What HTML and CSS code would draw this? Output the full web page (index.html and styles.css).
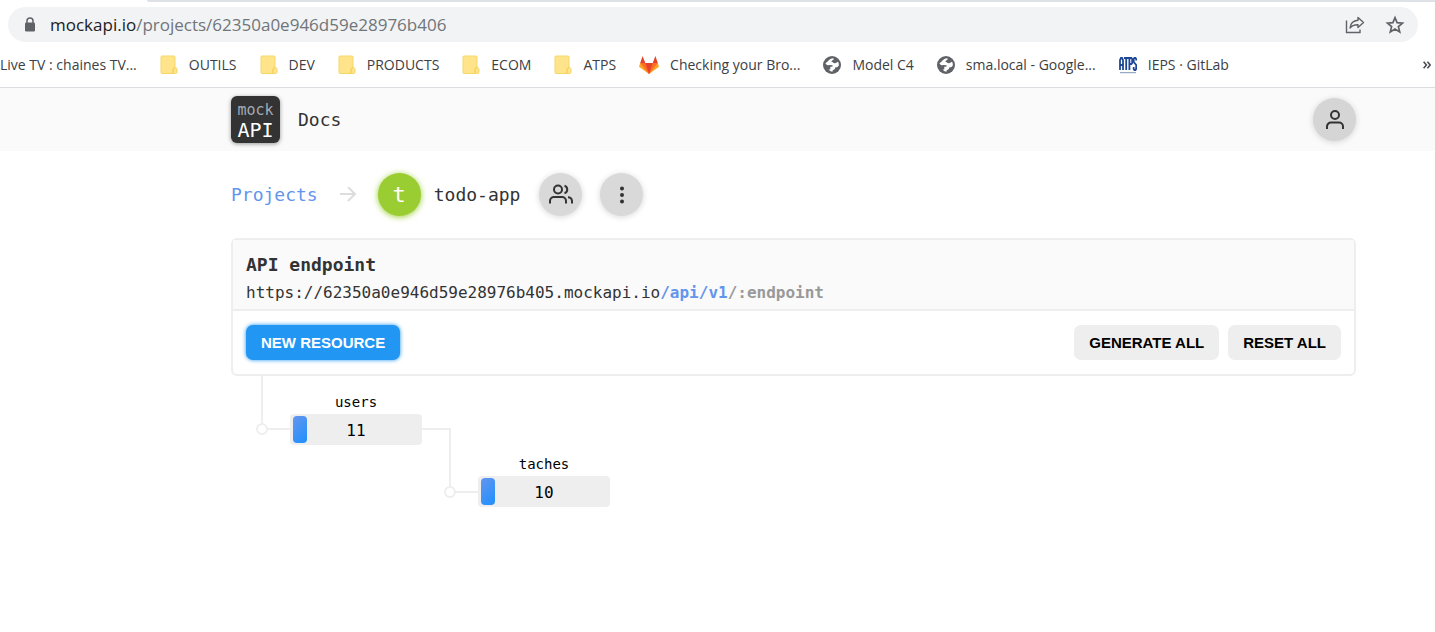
FILE: index.html
```html
<!DOCTYPE html>
<html lang="en">
<head>
<meta charset="utf-8">
<title>mockAPI - todo-app</title>
<link rel="stylesheet" href="styles.css">
</head>
<body>
<svg class="defs" width="0" height="0" aria-hidden="true">
  <symbol id="folder" viewBox="0 0 18 20">
    <path d="M2 1h12a1 1 0 0 1 1 1v11h1.200a1 1 0 0 1 .8 1v3a1.500 1.500 0 0 1-1.500 1.500H2a1 1 0 0 1-1-1V2a1 1 0 0 1 1-1z" fill="#ffe48c" stroke="#f5d766"/>
    <path d="M15 12.500c-1.500.3-2 1.200-2 2.500v3" fill="none" stroke="#efc940"/>
  </symbol>
  <symbol id="globe" viewBox="0 0 18 18">
    <circle cx="9" cy="9" r="9" fill="#5f6368"/>
    <path d="M10.200 2.200c-2.200.1-3.500 1-4.700 2.400-.9 1-1.700 1.800-3.100 2.900 1.100 1.600 2.500 2 4.200 1.600l2.600.1c.8.2.6 1.300-.2 1.500l-1.700.1v2.700H5.600c.9 1.400 2.500 2.100 4.100 2l.1-1.500c1.600-.1 2.400-1.200 2.300-2.500 1.800.1 3-.5 3.700-1.900.2-1.400-.1-2.700-.8-3.800-1.600.4-1.900 1.700-3.400 1.500-1.400-.2-1.800-1.600-3.200-1.500.1-1 .7-1.500 1.700-1.800.6-.3.800-1 .1-1.800z" fill="#fff"/>
  </symbol>
</svg>

<header class="browser">
  <div class="tab-edge"></div>
  <div class="address">
    <svg class="lock" width="12" height="15" viewBox="0 0 12 15"><path d="M3 6V4a3 3 0 0 1 6 0v2" fill="none" stroke="#5f6368" stroke-width="1.500"/><rect x="1" y="5.500" width="10" height="9" rx="1.300" fill="#5f6368"/></svg>
    <p class="url"><span class="host">mockapi.io</span>/projects/62350a0e946d59e28976b406</p>
    <button class="tool" aria-label="Share"><svg width="20" height="18" viewBox="0 0 20 18" fill="none" stroke="#5f6368" stroke-width="1.400"><path d="M1.500 4.500v12h13.500v-3"/><path d="M13 1.500l5.500 5-5.500 5V8.700c-3.500-.1-6.200.8-8 3.300.4-4.200 3-7.200 8-7.700z" stroke-linejoin="round"/></svg></button>
    <button class="tool" aria-label="Bookmark"><svg width="20" height="20" viewBox="0 0 20 20" fill="none" stroke="#5f6368" stroke-width="1.700"><path d="M10 2.600l2.100 5 5.400.5-4.100 3.500 1.300 5.300-4.700-2.900-4.700 2.900 1.300-5.300-4.100-3.500 5.400-.5z"/></svg></button>
  </div>
  <nav class="bookmarks" aria-label="Bookmarks">
    <a href="#">Live TV : chaines TV...</a>
    <a href="#"><svg width="18" height="20"><use href="#folder"/></svg>OUTILS</a>
    <a href="#"><svg width="18" height="20"><use href="#folder"/></svg>DEV</a>
    <a href="#"><svg width="18" height="20"><use href="#folder"/></svg>PRODUCTS</a>
    <a href="#"><svg width="18" height="20"><use href="#folder"/></svg>ECOM</a>
    <a href="#"><svg width="18" height="20"><use href="#folder"/></svg>ATPS</a>
    <a href="#"><svg width="20" height="18" viewBox="0 0 20 18"><path d="M10 18L0 10.700 1.200 7h17.600l1.200 3.700z" fill="#fca326"/><path d="M10 18L1.200 7h17.600z" fill="#fc6d26"/><path d="M10 18L6.300 7h7.400z" fill="#e24329"/><path d="M1.200 7L3.600 0l2.700 7zM18.800 7L16.400 0l-2.700 7z" fill="#e24329"/></svg>Checking your Bro...</a>
    <a href="#"><svg width="18" height="18"><use href="#globe"/></svg>Model C4</a>
    <a href="#"><svg width="18" height="18"><use href="#globe"/></svg>sma.local - Google...</a>
    <a href="#"><svg width="18" height="18" viewBox="0 0 18 18" fill="none" stroke="#1d4795" stroke-width="1.800"><path d="M1 14V4l1-2h1l1 2v10M1 9h3M5 2h4.500M7.200 2v12M10.400 14V2h2l.8 1v4l-.8 1h-2M17.200 4.500V3l-.8-1h-1l-.7 1v3l2.500 3v4l-.8 1h-1l-.7-1v-2"/><path d="M1 16.700h16" stroke="#8195bb" stroke-width="1"/></svg>IEPS · GitLab</a>
    <button class="more" aria-label="More bookmarks"><svg width="8" height="8" viewBox="0 0 8 8" fill="none" stroke="#4a4d51" stroke-width="1.600"><path d="M.6.800L3.400 4 .6 7.200M4.400.800L7.200 4 4.400 7.200"/></svg></button>
  </nav>
</header>

<div class="navbar">
  <a class="logo" href="#"><span class="logo-top">mock</span><span class="logo-main">API</span></a>
  <a class="docs" href="#">Docs</a>
  <button class="round account" aria-label="Account"><svg width="24" height="24" viewBox="0 0 24 24"><circle cx="12" cy="7" r="4"/><path d="M4 21v-2.500a4 4 0 0 1 4-4h8a4 4 0 0 1 4 4V21"/></svg></button>
</div>

<main class="content">
  <div class="crumbs">
    <a class="projects" href="#">Projects</a>
    <svg class="arrow" width="16" height="16" viewBox="0 0 16 16"><path d="M0 7h15M8 0l7 7-7 7"/></svg>
    <div class="project">
      <span class="avatar">t</span>
      <h1>todo-app</h1>
    </div>
    <div class="crumb-actions">
      <button class="round" aria-label="Collaborators"><svg width="24" height="24" viewBox="0 0 24 24"><circle cx="9" cy="6.500" r="4"/><path d="M1 20.500V18a4 4 0 0 1 4-4h8a4 4 0 0 1 4 4v2.500M15.500 2.700a4 4 0 0 1 0 7.600M19 14.200a4 4 0 0 1 4 3.900v2.400"/></svg></button>
      <button class="round" aria-label="Project menu"><svg width="24" height="24" viewBox="0 0 24 24"><circle cx="12" cy="5.500" r="1"/><circle cx="12" cy="12" r="1"/><circle cx="12" cy="18.500" r="1"/></svg></button>
    </div>
  </div>

  <section class="card">
    <div class="endpoint">
      <h2>API endpoint</h2>
      <p>https://62350a0e946d59e28976b405.mockapi.io<b class="prefix">/api/v1</b><b class="suffix">/:endpoint</b></p>
    </div>
    <div class="actions">
      <button class="btn primary">NEW RESOURCE</button>
      <button class="btn push">GENERATE ALL</button>
      <button class="btn">RESET ALL</button>
    </div>
  </section>

  <section class="tree" aria-label="Resources">
    <svg class="link" width="34" height="60" viewBox="0 0 34 60"><path d="M6 0v48M11 53h23"/><circle cx="6" cy="53" r="5"/></svg>
    <div class="resource">
      <span class="name">users</span>
      <div class="bar"><span class="fill"></span>11</div>
    </div>
    <div class="children">
      <svg class="link" width="56" height="71" viewBox="0 0 56 71"><path d="M0 1h28v58M33 64h23"/><circle cx="28" cy="64" r="5"/></svg>
      <div class="resource nested">
        <span class="name">taches</span>
        <div class="bar"><span class="fill"></span>10</div>
      </div>
    </div>
  </section>
</main>
</body>
</html>
```
FILE: styles.css
```css
* { box-sizing: border-box; }

body {
  margin: 0;
  background: #fff;
  color: #333;
  font-family: Consolas, "DejaVu Sans Mono", monospace;
}

h1, h2, p { margin: 0; }
a { color: inherit; text-decoration: none; }
button { border: 0; padding: 0; cursor: pointer; }
svg { flex: none; display: block; }
.defs { position: absolute; }

/* Browser chrome */
.browser {
  border-bottom: 1px solid #dadce0;
  font-family: "Open Sans", "Noto Sans", sans-serif;
}
.tab-edge {
  height: 2px;
  margin-left: 147px;
  background: #dee1e6;
  border-bottom-left-radius: 4px;
}
.address {
  display: flex;
  align-items: center;
  height: 35px;
  margin: 5px 17px 0 8px;
  padding: 0 13px 0 16px;
  border-radius: 18px;
  background: #f1f3f4;
}
.url {
  margin-left: 14px;
  margin-right: auto;
  font-size: 17px;
  color: #70757a;
}
.host { color: #202124; }
.tool { background: none; margin-left: 20px; }

.bookmarks {
  display: flex;
  align-items: center;
  gap: 23px;
  height: 45px;
  padding-right: 4px;
  font-size: 14px;
  color: #3c4043;
  white-space: nowrap;
}
.bookmarks a { display: flex; align-items: center; gap: 11px; }
.more { margin-left: auto; background: none; }

/* Site navigation */
.navbar {
  display: flex;
  align-items: center;
  height: 63px;
  padding: 0 79px 0 231px;
  background: #fafafa;
}
.logo {
  display: flex;
  flex-direction: column;
  align-items: center;
  justify-content: center;
  width: 49px;
  height: 47px;
  border-radius: 6px;
  background: #333;
  box-shadow: 0 1px 4px rgba(0, 0, 0, .4);
}
.logo-top { font-size: 15px; line-height: 20px; color: #a3aab6; }
.logo-main { font-size: 20px; line-height: 20px; color: #fff; }
.docs { margin-left: 18px; font-size: 18px; }
.round {
  display: flex;
  align-items: center;
  justify-content: center;
  width: 43px;
  height: 43px;
  border-radius: 50%;
  background: #d9d9d9;
  box-shadow: 0 1px 6px rgba(0, 0, 0, .16);
}
.round svg { fill: none; stroke: #333; stroke-width: 2; }
.account { margin-left: auto; background: #d5d5d5; }

/* Page content */
.content { padding: 0 79px 0 231px; }
.crumbs {
  display: flex;
  align-items: center;
  gap: 19px;
  height: 87px;
  font-size: 18px;
}
.projects { color: #6495ed; }
.arrow { margin: 0 3px; fill: none; stroke: #ddd; stroke-width: 2; }
.project { display: flex; align-items: center; gap: 13px; }
.project h1 { font-size: 18px; font-weight: 400; }
.avatar {
  width: 43px;
  height: 43px;
  border-radius: 50%;
  background: #9acd32;
  box-shadow: 0 1px 6px #9acd32;
  color: #fff;
  font-size: 22px;
  line-height: 43px;
  text-align: center;
}
.crumb-actions { display: flex; gap: 18px; }

.card {
  border: 2px solid #eee;
  border-radius: 6px;
  background: #fff;
}
.endpoint {
  padding: 11px 13px 2px;
  border-bottom: 2px solid #eee;
  background: #fafafa;
  line-height: 28px;
}
.endpoint h2 { font-size: 18px; font-weight: 700; }
.endpoint p { font-size: 16px; }
.prefix { color: #6495ed; }
.suffix { color: #999; }
.actions { display: flex; gap: 9px; padding: 14px 13px; }
.btn {
  height: 35px;
  padding: 0 15px;
  border-radius: 7px;
  background: #eee;
  color: #000;
  font: 700 15px "Liberation Sans", Arial, sans-serif;
}
.primary {
  background: #2196f3;
  color: #fff;
  box-shadow: 0 0 4px #2196f3;
}
.push { margin-left: auto; }

/* Resource tree */
.tree { display: flex; align-items: flex-start; padding-left: 25px; color: #000; }
.link { fill: #fff; stroke: #eee; stroke-width: 2; }
.link path { fill: none; }
.resource { width: 132px; padding-top: 14px; text-align: center; }
.name { display: block; font-size: 14px; line-height: 24px; }
.bar {
  position: relative;
  height: 31px;
  border-radius: 4px;
  background: #eee;
  font-size: 16px;
  line-height: 34px;
}
.fill {
  position: absolute;
  top: 2px;
  bottom: 2px;
  left: 3px;
  width: 14px;
  border-radius: 4px;
  background: linear-gradient(135deg, #6495ed, #1e90ff);
}
.children { display: flex; align-items: flex-start; padding-top: 52px; }
.nested { padding-top: 24px; }
```
